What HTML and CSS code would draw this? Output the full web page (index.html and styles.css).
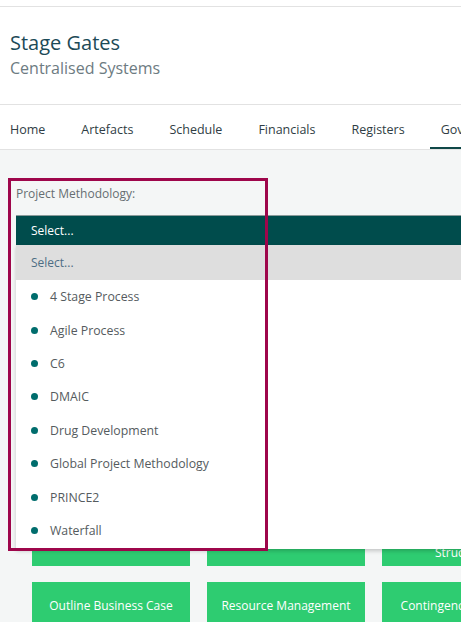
FILE: index.html
```html
<!DOCTYPE html>
<html lang="en">
<head>
<meta charset="utf-8">
<title>Stage Gates</title>
<link rel="stylesheet" href="styles.css">
</head>
<body>
<div class="topbar"></div>
<header class="header">
  <h1 class="title">Stage Gates</h1>
  <div class="subtitle">Centralised Systems</div>
</header>
<nav class="tabs">
  <a class="tab">Home</a>
  <a class="tab">Artefacts</a>
  <a class="tab">Schedule</a>
  <a class="tab">Financials</a>
  <a class="tab">Registers</a>
  <a class="tab active">Governance</a>
</nav>
<main class="content">
  <div class="field">
    <label class="field-label">Project Methodology:</label>
    <div class="select-bar">Select...</div>
    <ul class="menu">
      <li class="menu-placeholder">Select...</li>
      <li class="menu-item">4 Stage Process</li>
      <li class="menu-item">Agile Process</li>
      <li class="menu-item">C6</li>
      <li class="menu-item">DMAIC</li>
      <li class="menu-item">Drug Development</li>
      <li class="menu-item">Global Project Methodology</li>
      <li class="menu-item">PRINCE2</li>
      <li class="menu-item">Waterfall</li>
    </ul>
  </div>
  <div class="tiles">
    <div class="tile tile-top">Project Brief</div>
    <div class="tile tile-top">Stakeholders</div>
    <div class="tile">Governance<br>Structure</div>
    <div class="tile">Outline Business Case</div>
    <div class="tile">Resource Management</div>
    <div class="tile">Contingency Planning</div>
  </div>
  <div class="highlight"></div>
</main>
</body>
</html>
```
FILE: styles.css
```css
html, body {
  margin: 0;
  padding: 0;
  overflow: hidden;
  background: #ffffff;
  font-family: "Open Sans", "Noto Sans", sans-serif;
}
.topbar {
  height: 6px;
  border-bottom: 1px solid #e2e2e2;
}
.header {
  padding: 22px 10px 25px;
  border-bottom: 1px solid #e2e2e2;
}
.title {
  margin: 0;
  font-size: 20px;
  line-height: 28px;
  font-weight: 400;
  color: #1c4a57;
}
.subtitle {
  font-size: 16px;
  line-height: 22px;
  color: #6d7b82;
}
.tabs {
  display: flex;
  gap: 14px;
  height: 44px;
  border-bottom: 1px solid #e2e2e2;
  white-space: nowrap;
  overflow: hidden;
}
.tab {
  display: flex;
  align-items: center;
  padding: 6px 11px 0;
  font-size: 12.5px;
  color: #2f3d44;
  border-bottom: 2px solid transparent;
}
.tab:first-child {
  padding-left: 10px;
}
.tab.active {
  border-bottom-color: #0f4848;
}
.content {
  position: relative;
  background: #f4f6f6;
  height: 480px;
  padding: 35px 0 0 16px;
}
.field {
  position: relative;
  z-index: 2;
}
.field-label {
  display: block;
  font-size: 12px;
  line-height: 16px;
  color: #666e72;
  padding-top: 1px;
}
.select-bar {
  margin-top: 13px;
  height: 29px;
  line-height: 29px;
  padding-left: 15px;
  background: #004c4c;
  border-top: 1px solid #8a9a9a;
  color: #ffffff;
  font-size: 12px;
  width: 500px;
}
.menu {
  position: absolute;
  left: 0;
  top: 60px;
  width: 500px;
  margin: 0;
  padding: 0 0 2px;
  list-style: none;
  background: #ffffff;
  box-shadow: 0 2px 4px rgba(0, 0, 0, 0.2);
}
.menu-placeholder {
  height: 35px;
  line-height: 35px;
  padding-left: 15px;
  background: #dedede;
  color: #4d6d84;
  font-size: 12px;
}
.menu-item {
  display: flex;
  align-items: center;
  gap: 12px;
  height: 33.4px;
  padding-left: 15px;
  color: #555b5e;
  font-size: 12.3px;
}
.menu-item::before {
  content: "";
  width: 7px;
  height: 7px;
  border-radius: 50%;
  background: #006d6d;
  flex: none;
}
.tiles {
  display: grid;
  grid-template-columns: repeat(3, 158px);
  grid-auto-rows: 48px;
  column-gap: 17px;
  row-gap: 16px;
  margin: 273px 0 0 16px;
  width: 600px;
}
.tile {
  display: flex;
  align-items: center;
  justify-content: center;
  text-align: center;
  background: #2ecc71;
  color: #ffffff;
  font-size: 12px;
  line-height: 22px;
  white-space: nowrap;
}
.tile-top {
  align-items: flex-start;
  padding-top: 6px;
}
.highlight {
  position: absolute;
  z-index: 3;
  left: 8px;
  top: 28px;
  width: 254px;
  height: 367px;
  border: 3px solid #9e064b;
  pointer-events: none;
}
```
